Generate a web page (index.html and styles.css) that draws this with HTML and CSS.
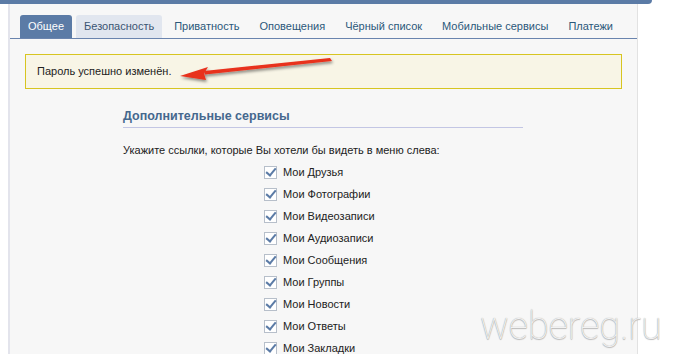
FILE: index.html
```html
<!DOCTYPE html>
<html lang="ru">

<head>
    <meta charset="UTF-8">
    <title>Настройки</title>
    <link rel="stylesheet" href="styles.css">
</head>

<body>

    <div class="top-bar"></div>

    <div class="settings">
        <div class="tabs">
            <a class="tab active">Общее</a>
            <a class="tab hover">Безопасность</a>
            <a class="tab">Приватность</a>
            <a class="tab">Оповещения</a>
            <a class="tab">Чёрный список</a>
            <a class="tab">Мобильные сервисы</a>
            <a class="tab">Платежи</a>
        </div>

        <div class="notice">Пароль успешно изменён.</div>

        <div class="section">
            <h2 class="section-title">Дополнительные сервисы</h2>
            <p class="section-text">Укажите ссылки, которые Вы хотели бы видеть в меню слева:</p>

            <ul class="links">
                <li><span class="check"></span>Мои Друзья</li>
                <li><span class="check"></span>Мои Фотографии</li>
                <li><span class="check"></span>Мои Видеозаписи</li>
                <li><span class="check"></span>Мои Аудиозаписи</li>
                <li><span class="check"></span>Мои Сообщения</li>
                <li><span class="check"></span>Мои Группы</li>
                <li><span class="check"></span>Мои Новости</li>
                <li><span class="check"></span>Мои Ответы</li>
                <li><span class="check"></span>Мои Закладки</li>
            </ul>
        </div>
    </div>

    <!-- red arrow pointing at the message -->
    <svg class="arrow" width="170" height="40" viewBox="0 0 170 40">
        <defs>
            <filter id="shadow" x="-10%" y="-50%" width="120%" height="200%">
                <feDropShadow dx="1" dy="2" stdDeviation="1.5" flood-color="#000" flood-opacity="0.45" />
            </filter>
        </defs>
        <g filter="url(#shadow)" fill="#e8301c">
            <polygon points="155,8 157,11 30,24.5 29,21" />
            <polygon points="5,26 33,17 29,23.5 31,30" />
        </g>
    </svg>

    <div class="watermark">webereg.ru</div>

</body>

</html>
```

FILE: styles.css
```css
body {
    margin: 0;
    height: 354px;
    overflow: hidden;
    background: #fff;
    font-family: "Liberation Sans", Arial, sans-serif;
    font-size: 11px;
    color: #222;
    position: relative;
}

.top-bar {
    width: 652px;
    height: 4px;
    background: #5b7ba6;
    border-bottom-right-radius: 6px;
}

.settings {
    width: 627px;
    height: 350px;
    margin-left: 8px;
    background: #f7f7f7;
    border-left: 2px solid #e3e4ec;
    border-right: 1px solid #e2e2e2;
}

.tabs {
    display: flex;
    gap: 4px;
    padding: 11px 0 0 10px;
    border-bottom: 1px solid #6a84ae;
}

.tab {
    display: block;
    flex-shrink: 0;
    white-space: nowrap;
    height: 23px;
    line-height: 23px;
    padding: 0 8px;
    border-radius: 3px 3px 0 0;
    color: #2b587a;
}

.tab.active {
    background: #5b7ba6;
    color: #fff;
}

.tab.hover {
    background: #e1e6ef;
    color: #3b5573;
}

.notice {
    margin: 15px 15px 0 15px;
    height: 33px;
    line-height: 33px;
    padding-left: 11px;
    background: #f8f5e6;
    border: 1px solid #d7c521;
    color: #222;
}

.section {
    margin-left: 113px;
    width: 400px;
    padding-top: 20px;
}

.section-title {
    margin: 0;
    padding-bottom: 4px;
    font-size: 12.5px;
    font-weight: bold;
    color: #45688e;
    border-bottom: 1px solid #c3c6e4;
}

.section-text {
    margin: 16px 0 5px;
    color: #222;
}

.links {
    list-style: none;
    margin: 0;
    padding: 0 0 0 141px;
}

.links li {
    display: flex;
    align-items: center;
    height: 22px;
    color: #222;
}

.check {
    position: relative;
    width: 11px;
    height: 11px;
    margin-right: 6px;
    background: #fff;
    border: 1px solid #b7bfca;
}

.check::after {
    content: "";
    position: absolute;
    left: 3px;
    top: -1px;
    width: 4px;
    height: 8px;
    border-right: 2px solid #5b7ba6;
    border-bottom: 2px solid #5b7ba6;
    transform: rotate(40deg);
}

.arrow {
    position: absolute;
    left: 175px;
    top: 50px;
}

.watermark {
    position: absolute;
    left: 480px;
    top: 304px;
    font-family: Roboto, sans-serif;
    font-weight: 100;
    font-size: 38px;
    color: #f2f2f2;
    text-shadow: 0 0 1px #999, 0 1px 1px #bbb;
}
```
